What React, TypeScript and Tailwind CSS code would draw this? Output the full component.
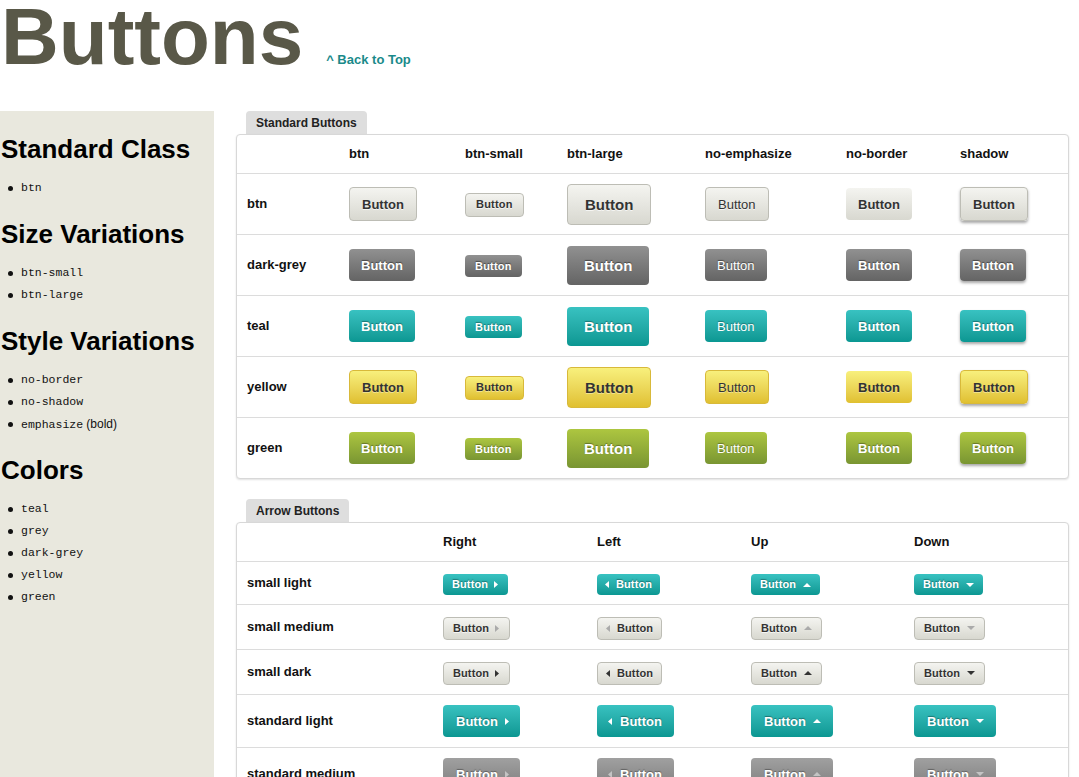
import React from "react";

type Color = "light" | "dark" | "teal" | "yellow" | "green" | "grey";
type Size = "small" | "std" | "large";
type Arrow = "right" | "left" | "up" | "down";

const COLOR_CLASS: Record<Color, string> = {
  light: "bg-linear-to-b from-[#f4f4f0] to-[#d8d8d0] border border-[#bdbdb5] text-[#333] [text-shadow:0_1px_0_rgba(255,255,255,0.7)]",
  yellow: "bg-linear-to-b from-[#f8f07c] to-[#e0c02f] border border-[#d8b93a] text-[#333] [text-shadow:0_1px_0_rgba(255,255,255,0.4)]",
  dark: "bg-linear-to-b from-[#919191] to-[#646464] text-white [text-shadow:0_-1px_1px_rgba(0,0,0,0.45)]",
  teal: "bg-linear-to-b from-[#38c2c1] to-[#0a9792] text-white [text-shadow:0_-1px_1px_rgba(0,0,0,0.35)]",
  green: "bg-linear-to-b from-[#adc640] to-[#799532] text-white [text-shadow:0_-1px_1px_rgba(0,0,0,0.35)]",
  grey: "bg-linear-to-b from-[#a0a0a0] to-[#7e7e7e] text-white [text-shadow:0_-1px_1px_rgba(0,0,0,0.35)]",
};

const SIZE_CLASS: Record<Size, string> = {
  small: "h-[22px] px-[10px] text-[11px] tracking-[0.2px]",
  std: "h-[32px] px-[12px] text-[13px]",
  large: "h-[39px] px-[17px] text-[15px]",
};

function Btn({
  color,
  size = "std",
  bold = true,
  border = true,
  shadow = false,
}: {
  color: Color;
  size?: Size;
  bold?: boolean;
  border?: boolean;
  shadow?: boolean;
}) {
  let cls = COLOR_CLASS[color];
  if (!border) cls = cls.replace(/border border-\[#[0-9a-f]+\]/, "");
  return (
    <span
      className={`inline-flex items-center justify-center rounded-[4px] box-content leading-none ${cls} ${SIZE_CLASS[size]} ${
        bold ? "font-bold" : "font-normal"
      } ${shadow ? "shadow-[0_2px_3px_rgba(0,0,0,0.35)]" : ""}`}
    >
      Button
    </span>
  );
}

function Tri({ dir, fill }: { dir: Arrow; fill: string }) {
  if (dir === "right")
    return (
      <svg width="4" height="7" viewBox="0 0 4 7">
        <polygon points="0,0 4,3.5 0,7" fill={fill} />
      </svg>
    );
  if (dir === "left")
    return (
      <svg width="4" height="7" viewBox="0 0 4 7">
        <polygon points="4,0 0,3.5 4,7" fill={fill} />
      </svg>
    );
  if (dir === "up")
    return (
      <svg width="8" height="4" viewBox="0 0 8 4">
        <polygon points="0,4 4,0 8,4" fill={fill} />
      </svg>
    );
  return (
    <svg width="8" height="4" viewBox="0 0 8 4">
      <polygon points="0,0 8,0 4,4" fill={fill} />
    </svg>
  );
}

function ArrowBtn({
  dir,
  color,
  size,
  arrow,
}: {
  dir: Arrow;
  color: Color;
  size: "small" | "std";
  arrow: string;
}) {
  const small = size === "small";
  const pad =
    dir === "left"
      ? small
        ? "pl-[8px] pr-[8px] gap-[7px]"
        : "pl-[11px] pr-[12px] gap-[8px]"
      : dir === "right"
        ? small
          ? "pl-[9px] pr-[10px] gap-[6px]"
          : "pl-[13px] pr-[11px] gap-[7px]"
        : small
          ? "pl-[9px] pr-[9px] gap-[7px]"
          : "pl-[13px] pr-[12px] gap-[7px]";
  const h = small ? "h-[21px]" : "h-[32px]";
  const t = small ? "text-[11px] tracking-[0.1px]" : "text-[13px]";
  return (
    <span
      className={`inline-flex items-center rounded-[4px] box-content font-bold leading-none ${COLOR_CLASS[color]} ${h} ${t} ${pad}`}
    >
      {dir === "left" && <Tri dir={dir} fill={arrow} />}
      <span>Button</span>
      {dir !== "left" && <Tri dir={dir} fill={arrow} />}
    </span>
  );
}

const stdCols = ["btn", "btn-small", "btn-large", "no-emphasize", "no-border", "shadow"];
const stdRows: { label: string; color: Color }[] = [
  { label: "btn", color: "light" },
  { label: "dark-grey", color: "dark" },
  { label: "teal", color: "teal" },
  { label: "yellow", color: "yellow" },
  { label: "green", color: "green" },
];

const STD_GRID = "grid grid-cols-[112px_116px_102px_138px_141px_114px_1fr] items-center";
const ARR_GRID = "grid grid-cols-[206px_154px_154px_163px_1fr] items-center";

const arrowRows: {
  label: string;
  color: Color;
  size: "small" | "std";
  arrow: string;
  h: string;
}[] = [
  { label: "small light", color: "teal", size: "small", arrow: "#ffffff", h: "h-[42px]" },
  { label: "small medium", color: "light", size: "small", arrow: "#aaaaaa", h: "h-[44px]" },
  { label: "small dark", color: "light", size: "small", arrow: "#333333", h: "h-[44px]" },
  { label: "standard light", color: "teal", size: "std", arrow: "#ffffff", h: "h-[52px]" },
  { label: "standard medium", color: "grey", size: "std", arrow: "#c4c4c4", h: "h-[52px]" },
  { label: "standard dark", color: "grey", size: "std", arrow: "#333333", h: "h-[52px]" },
];

function SideHeading({ children }: { children: React.ReactNode }) {
  return <h2 className="text-[26px] font-bold leading-[26px] text-black pl-[1px]">{children}</h2>;
}

function SideList({ items }: { items: React.ReactNode[] }) {
  return (
    <ul className="mt-[15px] mb-[22px]">
      {items.map((it, i) => (
        <li key={i} className="flex items-center h-[22px]">
          <span className="ml-[8px] w-[5px] h-[5px] rounded-full bg-[#111]" />
          <span className="ml-[8px] text-[11.5px] text-[#111]">{it}</span>
        </li>
      ))}
    </ul>
  );
}

function Tab({ children, className = "" }: { children: React.ReactNode; className?: string }) {
  return (
    <div
      className={`ml-[10px] flex w-fit items-center h-[23px] px-[10px] rounded-t-[4px] bg-[#dedede] text-[12px] font-bold text-[#222] ${className}`}
    >
      {children}
    </div>
  );
}

const mono = "font-['Liberation_Mono',monospace]";

export default function App() {
  return (
    <div className="min-h-screen bg-white font-['Liberation_Sans',Arial,sans-serif] text-[#111]">
      <header className="flex items-baseline h-[111px] pt-[1px]">
        <h1 className="pl-[1px] text-[80px] font-bold leading-[72px] text-[#595848]">Buttons</h1>
        <a className="ml-[23px] text-[13px] font-bold text-[#1a8a8a]">^ Back to Top</a>
      </header>

      <div className="flex">
        <aside className="w-[214px] shrink-0 bg-[#e9e8de] pt-[25px] min-h-[680px]">
          <SideHeading>Standard Class</SideHeading>
          <SideList items={[<span className={mono}>btn</span>]} />
          <SideHeading>Size Variations</SideHeading>
          <SideList items={[<span className={mono}>btn-small</span>, <span className={mono}>btn-large</span>]} />
          <SideHeading>Style Variations</SideHeading>
          <SideList
            items={[
              <span className={mono}>no-border</span>,
              <span className={mono}>no-shadow</span>,
              <span>
                <span className={mono}>emphasize</span> <span className="text-[12px]">(bold)</span>
              </span>,
            ]}
          />
          <SideHeading>Colors</SideHeading>
          <SideList
            items={["teal", "grey", "dark-grey", "yellow", "green"].map((c) => (
              <span className={mono}>{c}</span>
            ))}
          />
        </aside>

        <main className="ml-[22px] w-[833px]">
          <Tab>Standard Buttons</Tab>
          <div className="border border-[#d8d8d8] rounded-[4px] shadow-[0_1px_2px_rgba(0,0,0,0.12)] bg-white">
            <div className={`${STD_GRID} h-[38px] text-[13px] font-bold`}>
              <span />
              {stdCols.map((c) => (
                <span key={c}>{c}</span>
              ))}
            </div>
            {stdRows.map((r) => (
              <div key={r.label} className={`${STD_GRID} h-[61px] border-t border-[#dcdcdc]`}>
                <span className="pl-[10px] text-[13px] font-bold">{r.label}</span>
                <div>
                  <Btn color={r.color} />
                </div>
                <div>
                  <Btn color={r.color} size="small" />
                </div>
                <div>
                  <Btn color={r.color} size="large" />
                </div>
                <div>
                  <Btn color={r.color} bold={false} />
                </div>
                <div>
                  <Btn color={r.color} border={false} />
                </div>
                <div>
                  <Btn color={r.color} shadow />
                </div>
              </div>
            ))}
          </div>

          <Tab className="mt-[20px]">Arrow Buttons</Tab>
          <div className="border border-[#d8d8d8] rounded-[4px] shadow-[0_1px_2px_rgba(0,0,0,0.12)] bg-white mb-[20px]">
            <div className={`${ARR_GRID} h-[38px] text-[13px] font-bold`}>
              <span />
              <span>Right</span>
              <span>Left</span>
              <span>Up</span>
              <span>Down</span>
            </div>
            {arrowRows.map((r) => (
              <div key={r.label} className={`${ARR_GRID} ${r.h} box-content border-t border-[#dcdcdc]`}>
                <span className="pl-[10px] text-[13px] font-bold">{r.label}</span>
                {(["right", "left", "up", "down"] as Arrow[]).map((d) => (
                  <div key={d}>
                    <ArrowBtn dir={d} color={r.color} size={r.size} arrow={r.arrow} />
                  </div>
                ))}
              </div>
            ))}
          </div>
        </main>
      </div>
    </div>
  );
}
